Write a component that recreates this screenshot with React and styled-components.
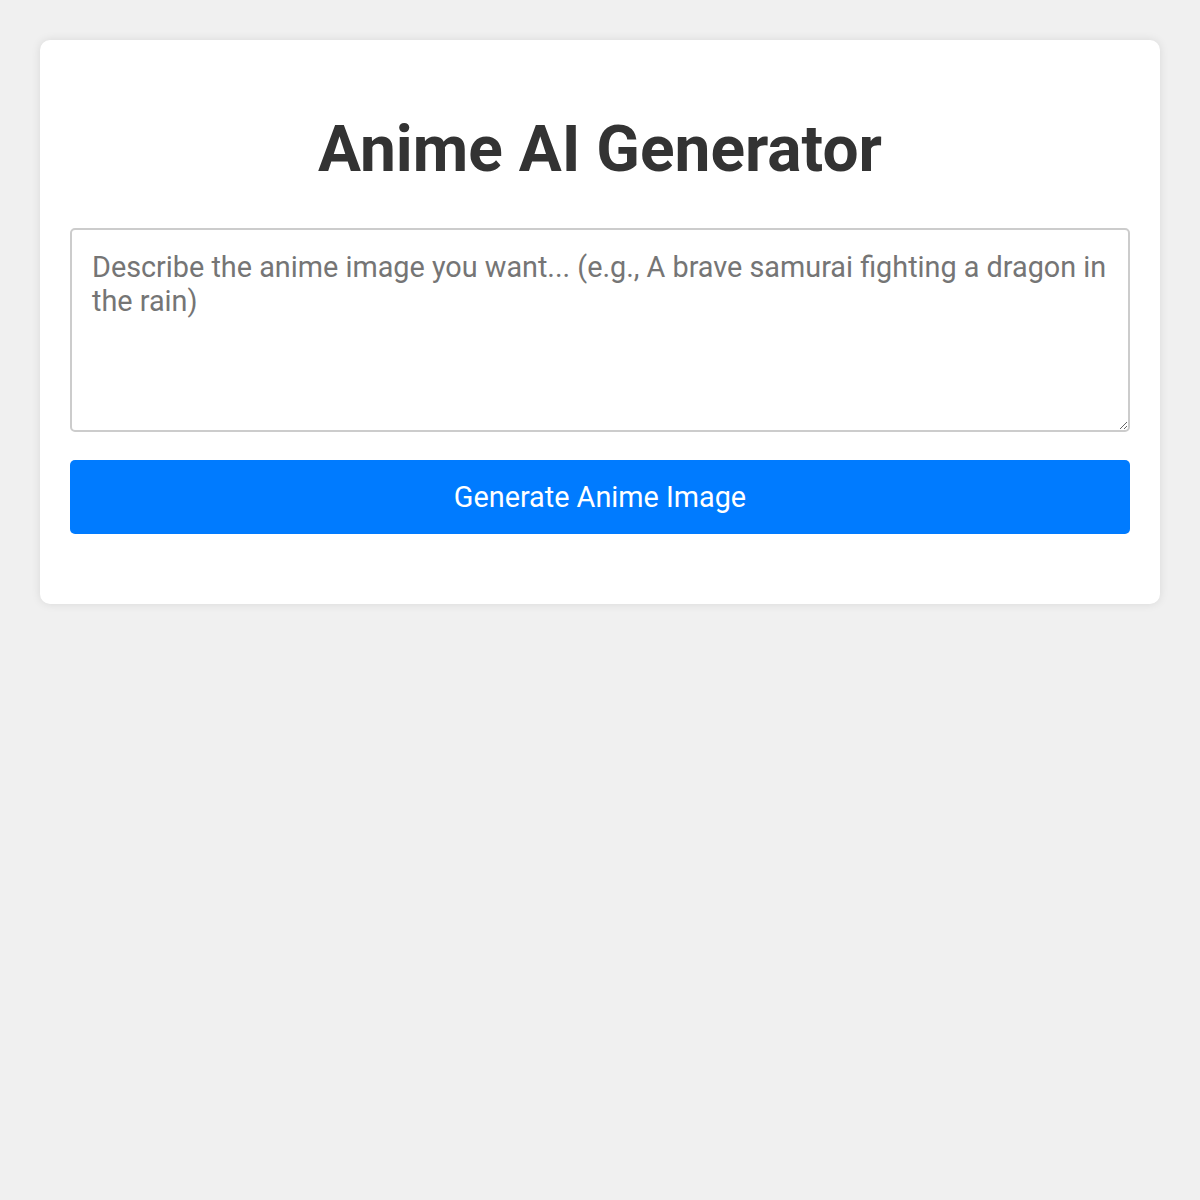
import React from "react";
import styled, { createGlobalStyle } from "styled-components";

const GlobalStyle = createGlobalStyle`
  html, body {
    margin: 0;
    padding: 0;
    background: #f0f0f0;
    font-family: Roboto, "Liberation Sans", Arial, sans-serif;
  }
  body {
    padding: 40px;
  }
  * { box-sizing: border-box; }
`;

const Card = styled.div`
  background: #ffffff;
  border-radius: 10px;
  box-shadow: 0 0 10px rgba(0, 0, 0, 0.1);
  padding: 30px;
`;

const Title = styled.h1`
  margin: 42px 0 41px;
  font-size: 64px;
  font-weight: 700;
  color: #333333;
  text-align: center;
  line-height: 75px;
`;

const Prompt = styled.textarea`
  display: block;
  width: 100%;
  height: 204px;
  padding: 20px;
  border: 2px solid #cccccc;
  border-radius: 5px;
  font-family: Roboto, "Liberation Sans", Arial, sans-serif;
  font-size: 28.8px;
  color: #333;
  resize: vertical;
  outline: none;
  &::placeholder {
    color: #757575;
  }
`;

const Button = styled.button`
  display: block;
  width: 100%;
  margin-top: 28px;
  padding: 20px;
  border: none;
  border-radius: 5px;
  background: #007bff;
  color: #ffffff;
  font-family: Roboto, "Liberation Sans", Arial, sans-serif;
  font-size: 28.8px;
  line-height: 34px;
  cursor: pointer;
`;

const Result = styled.div`
  min-height: 40px;
`;

export default function App() {
  return (
    <>
      <GlobalStyle />
      <Card>
        <Title>Anime AI Generator</Title>
        <Prompt placeholder="Describe the anime image you want... (e.g., A brave samurai fighting a dragon in the rain)" />
        <Button>Generate Anime Image</Button>
        <Result />
      </Card>
    </>
  );
}
